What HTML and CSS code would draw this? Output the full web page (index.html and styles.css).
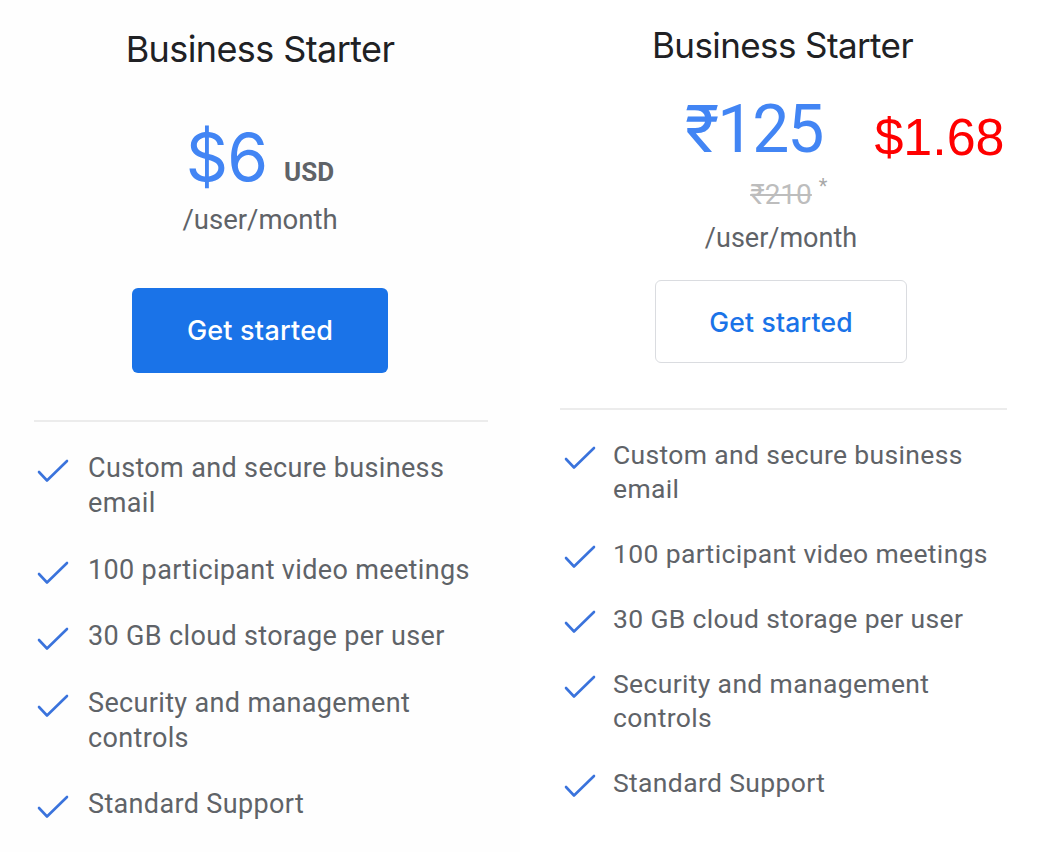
FILE: index.html
```html
<!DOCTYPE html>
<html lang="en">
<head>
<meta charset="utf-8">
<title>Business Starter pricing</title>
<link rel="stylesheet" href="styles.css">
</head>
<body>
<main class="compare">
  <section class="plan plan-usd">
    <h2 class="plan-title">Business Starter</h2>
    <div class="price-row">
      <span class="price">$6</span>
      <span class="currency">USD</span>
    </div>
    <div class="per">/user/month</div>
    <a class="btn btn-filled" href="#">Get started</a>
    <hr class="divider">
    <ul class="features">
      <li><svg class="check" viewBox="0 0 32 24"><polyline points="2,13 10,21.5 30,2"/></svg><span>Custom and secure business email</span></li>
      <li><svg class="check" viewBox="0 0 32 24"><polyline points="2,13 10,21.5 30,2"/></svg><span>100 participant video meetings</span></li>
      <li><svg class="check" viewBox="0 0 32 24"><polyline points="2,13 10,21.5 30,2"/></svg><span>30 GB cloud storage per user</span></li>
      <li><svg class="check" viewBox="0 0 32 24"><polyline points="2,13 10,21.5 30,2"/></svg><span>Security and management controls</span></li>
      <li><svg class="check" viewBox="0 0 32 24"><polyline points="2,13 10,21.5 30,2"/></svg><span>Standard Support</span></li>
    </ul>
  </section>
  <section class="plan plan-inr">
    <h2 class="plan-title plan-title-inr">Business Starter</h2>
    <div class="price-row-inr">
      <span class="price-inr">₹125</span>
      <span class="converted">$1.68</span>
    </div>
    <div class="old-price"><s>₹210</s><span class="star">*</span></div>
    <div class="per per-inr">/user/month</div>
    <a class="btn btn-outline" href="#">Get started</a>
    <hr class="divider divider-inr">
    <ul class="features features-inr">
      <li><svg class="check" viewBox="0 0 32 24"><polyline points="2,13 10,21.5 30,2"/></svg><span>Custom and secure business email</span></li>
      <li><svg class="check" viewBox="0 0 32 24"><polyline points="2,13 10,21.5 30,2"/></svg><span>100 participant video meetings</span></li>
      <li><svg class="check" viewBox="0 0 32 24"><polyline points="2,13 10,21.5 30,2"/></svg><span>30 GB cloud storage per user</span></li>
      <li><svg class="check" viewBox="0 0 32 24"><polyline points="2,13 10,21.5 30,2"/></svg><span>Security and management controls</span></li>
      <li><svg class="check" viewBox="0 0 32 24"><polyline points="2,13 10,21.5 30,2"/></svg><span>Standard Support</span></li>
    </ul>
  </section>
</main>
</body>
</html>
```

FILE: styles.css
```css
* { box-sizing: border-box; }
html, body {
  margin: 0;
  padding: 0;
  background: #ffffff;
  font-family: Roboto, "Liberation Sans", sans-serif;
}
.compare {
  display: flex;
  width: 1042px;
  height: 852px;
}
.plan {
  display: flex;
  flex-direction: column;
  align-items: center;
}
.plan-usd {
  width: 520px;
  background: #fefefe;
  padding-top: 31px;
}
.plan-inr {
  width: 522px;
  background: #ffffff;
  padding-top: 27px;
}
.plan-title {
  margin: 0;
  font-family: Inter, "Open Sans", sans-serif;
  font-weight: 400;
  font-size: 36px;
  line-height: 37px;
  letter-spacing: -0.6px;
  color: #202124;
}
.plan-title-inr {
  font-size: 35px;
  padding-left: 3px;
}
.price-row {
  display: flex;
  align-items: baseline;
  margin-top: 56px;
  line-height: 67px;
  height: 67px;
}
.price {
  font-family: Inter, Roboto, sans-serif;
  font-size: 66px;
  font-weight: 400;
  color: #4285f4;
  letter-spacing: -1px;
}
.currency {
  margin-left: 17px;
  font-family: Roboto, sans-serif;
  font-weight: 700;
  font-size: 26px;
  color: #5f6368;
}
.per {
  margin-top: 14px;
  font-size: 27.5px;
  line-height: 30px;
  color: #5f6368;
}
.btn {
  display: flex;
  align-items: center;
  justify-content: center;
  border-radius: 6px;
  text-decoration: none;
  font-family: Inter, "Open Sans", sans-serif;
  font-weight: 500;
  font-size: 27px;
  letter-spacing: 0.2px;
}
.btn-filled {
  margin-top: 53px;
  width: 256px;
  height: 85px;
  background: #1a73e8;
  color: #ffffff;
}
.divider {
  align-self: stretch;
  margin: 47px 32px 0 34px;
  border: 0;
  height: 2px;
  background: #ececec;
}
.features {
  list-style: none;
  margin: 29px 0 0 0;
  padding: 0 20px 0 37px;
  align-self: stretch;
  display: flex;
  flex-direction: column;
  gap: 31.5px;
}
.features li {
  display: flex;
  align-items: flex-start;
  font-size: 27px;
  line-height: 35px;
  color: #5f6368;
  letter-spacing: 0.35px;
}
.features li span { max-width: 400px; }
.check {
  flex: 0 0 32px;
  width: 32px;
  height: 24px;
  margin-top: 8px;
  margin-right: 19px;
}
.check polyline {
  fill: none;
  stroke: #3a73dc;
  stroke-width: 2.6;
  stroke-linecap: round;
  stroke-linejoin: round;
}

/* right plan */
.price-row-inr {
  align-self: stretch;
  display: flex;
  align-items: baseline;
  padding-left: 165px;
  margin-top: 32px;
  height: 67px;
  line-height: 67px;
}
.price-inr {
  font-family: Roboto, sans-serif;
  font-size: 66px;
  letter-spacing: -2px;
  color: #4285f4;
}
.converted {
  position: relative;
  top: 3px;
  margin-left: 52px;
  font-family: "Liberation Sans", Arial, sans-serif;
  font-size: 52px;
  color: #ff0000;
}
.old-price {
  position: relative;
  margin-top: 17px;
  font-size: 28px;
  line-height: 30px;
  color: #bdbdbd;
}
.old-price s { text-decoration-thickness: 2px; }
.star {
  position: absolute;
  left: 100%;
  top: -9px;
  margin-left: 7px;
  font-size: 20px;
  color: #a8a8a8;
}
.per-inr {
  margin-top: 13px;
  font-size: 27px;
}
.btn-outline {
  margin-top: 27px;
  width: 252px;
  height: 83px;
  background: #ffffff;
  border: 1.5px solid #dadce0;
  color: #1a73e8;
  font-size: 26.5px;
}
.divider-inr {
  margin: 45px 35px 0 40px;
}
.features-inr {
  margin-top: 28px;
  padding-left: 44px;
  gap: 31px;
}
.features-inr li {
  line-height: 34px;
  font-size: 26.5px;
}
.features-inr .check { margin-right: 17px; }
```
